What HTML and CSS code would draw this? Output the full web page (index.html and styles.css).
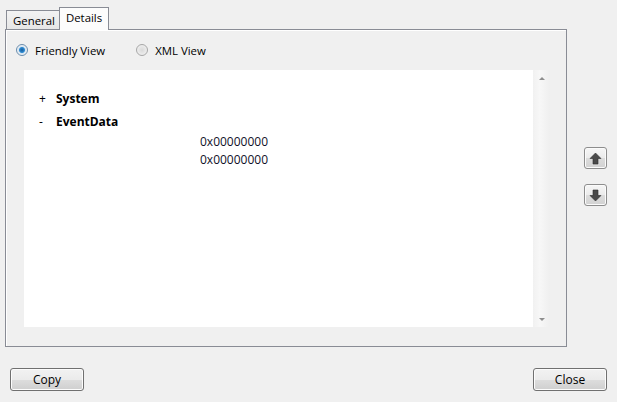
FILE: index.html
```html
<!DOCTYPE html>
<html>
  <head>
    <title>Event Properties</title>
    <link rel="stylesheet" href="styles.css">
  </head>
  <body>
    <div class="dialog">
      <div class="main">
        <div class="left">
          <div class="tabs">
            <div class="tab">General</div>
            <div class="tab active">Details</div>
          </div>
          <div class="panel">
            <div class="radios">
              <label class="radio"><span class="dot on"></span>Friendly View</label>
              <label class="radio"><span class="dot"></span>XML View</label>
            </div>
            <div class="view">
              <div class="tree">
                <div class="node"><span class="sign">+</span><b>System</b></div>
                <div class="node"><span class="sign">-</span><b>EventData</b></div>
                <div class="value">0x00000000</div>
                <div class="value">0x00000000</div>
              </div>
              <div class="scrollbar">
                <span class="tri up"></span>
                <span class="tri down"></span>
              </div>
            </div>
          </div>
        </div>
        <div class="side">
          <button class="arrow" title="Previous">
            <svg width="13" height="13" viewBox="0 0 13 13">
              <path d="M6.5 1 L12 6.5 L9 6.5 L9 12 L4 12 L4 6.5 L1 6.5 Z" fill="#4a4a4a" stroke="#2e2e2e" stroke-width="0.6"/>
            </svg>
          </button>
          <button class="arrow" title="Next">
            <svg width="13" height="13" viewBox="0 0 13 13">
              <path d="M6.5 12 L12 6.5 L9 6.5 L9 1 L4 1 L4 6.5 L1 6.5 Z" fill="#4a4a4a" stroke="#2e2e2e" stroke-width="0.6"/>
            </svg>
          </button>
        </div>
      </div>
      <div class="footer">
        <button class="btn">Copy</button>
        <button class="btn">Close</button>
      </div>
    </div>
  </body>
</html>
```

FILE: styles.css
```css
html,
body {
  margin: 0;
  padding: 0;
  background: #f0f0f0;
  font-family: "Open Sans", "Noto Sans", sans-serif;
  font-size: 11.4px;
  color: #000;
  overflow: hidden;
}

.dialog {
  width: 617px;
  height: 402px;
  box-sizing: border-box;
  padding: 7px 10px 0 5px;
  display: flex;
  flex-direction: column;
}

.main {
  display: flex;
}

.left {
  width: 562px;
}

.tabs {
  display: flex;
  align-items: flex-end;
  height: 22px;
  padding-left: 1px;
  position: relative;
  z-index: 1;
}

.tab {
  height: 19px;
  box-sizing: border-box;
  padding: 1px 4px 0 6px;
  border: 1px solid #898c95;
  border-bottom: none;
  background: linear-gradient(#f3f3f3, #e6e6e6);
  line-height: 17px;
}

.tab.active {
  height: 23px;
  margin-bottom: -1px;
  padding: 1px 6px 0 6px;
  background: #fcfcfc;
  margin-left: -1px;
}

.panel {
  height: 318px;
  box-sizing: border-box;
  border: 1px solid #898c95;
  box-shadow: inset 1px 1px 0 #fff;
  background: #f0f0f0;
  padding: 0 16px 19px 18px;
  display: flex;
  flex-direction: column;
}

.radios {
  display: flex;
  height: 40px;
  align-items: center;
  margin-left: -8px;
}

.radio {
  display: flex;
  align-items: center;
  gap: 7px;
  margin-right: 31px;
}

.dot {
  width: 12px;
  height: 12px;
  box-sizing: border-box;
  border-radius: 50%;
  border: 1px solid #a7a7a7;
  background: radial-gradient(#dadada, #f6f6f6);
}

.dot.on {
  border-color: #6a8cab;
  background: radial-gradient(circle, #1a5c9a 0, #2d8ad1 2.5px, #d7e4ef 3.5px, #eef3f8 5px);
}

.view {
  flex: 1;
  display: flex;
  background: #fff;
}

.tree {
  flex: 1;
  padding: 17px 0 0 15px;
  font-size: 12px;
}

.node {
  display: flex;
  height: 23px;
  align-items: center;
}

.sign {
  width: 17px;
}

.value {
  height: 18px;
  line-height: 18px;
  padding-left: 161px;
  color: #101028;
}

.scrollbar {
  width: 17px;
  background: linear-gradient(90deg, #f1f1f1, #f7f7f7 40%, #efefef);
  display: flex;
  flex-direction: column;
  justify-content: space-between;
  align-items: center;
  padding: 7px 0 6px;
}

.tri {
  width: 0;
  height: 0;
  border-left: 3px solid transparent;
  border-right: 3px solid transparent;
}

.tri.up {
  border-bottom: 3px solid #8e8e8e;
}

.tri.down {
  border-top: 3px solid #8e8e8e;
}

.side {
  flex: 1;
  display: flex;
  flex-direction: column;
  align-items: flex-end;
  padding-top: 140px;
  gap: 15px;
}

.arrow {
  width: 23px;
  height: 22px;
  padding: 0;
  border: 1px solid #8d8d8d;
  border-radius: 3px;
  background: linear-gradient(#f6f6f6, #ebebeb 50%, #dcdcdc 51%, #d2d2d2);
  box-shadow: inset 0 0 0 1px #fbfbfb;
  display: flex;
  align-items: center;
  justify-content: center;
}

.footer {
  display: flex;
  justify-content: space-between;
  padding: 21px 0 0 5px;
}

.btn {
  width: 74px;
  height: 23px;
  border: 1px solid #707070;
  border-radius: 3px;
  background: linear-gradient(#f2f2f2, #ebebeb 50%, #dddddd 51%, #cfcfcf);
  box-shadow: inset 0 0 0 1px #fcfcfc;
  font-family: "Open Sans", "Noto Sans", sans-serif;
  font-size: 12px;
  padding: 0;
  color: #000;
}
```
